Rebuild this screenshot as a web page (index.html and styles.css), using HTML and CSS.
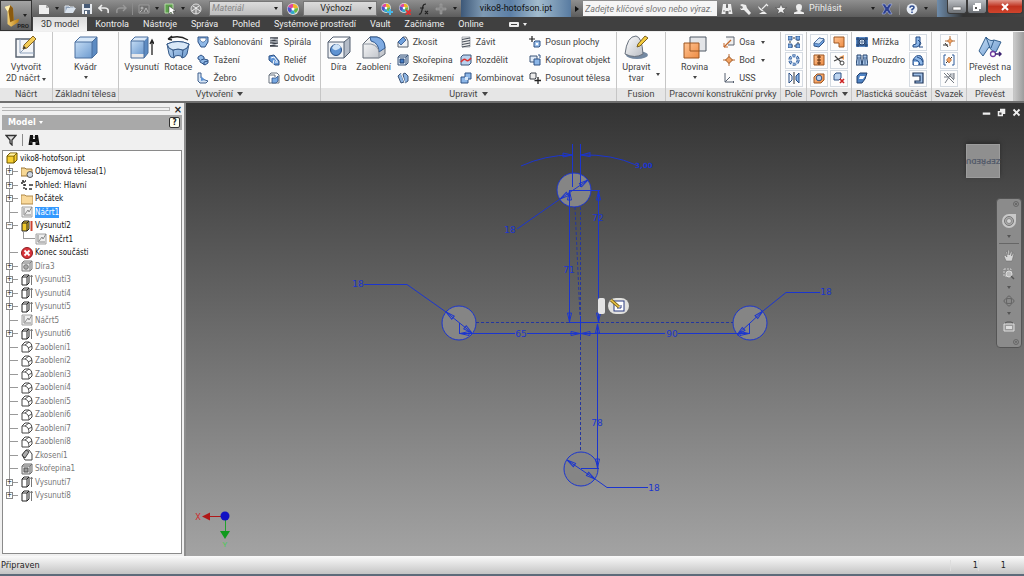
FILE: index.html
```html
<!DOCTYPE html>
<html lang="cs">
<head>
    <meta charset="UTF-8">
    <meta name="viewport" content="width=device-width, initial-scale=1.0">
    <title>viko8-hotofson.ipt</title>
    <link rel="stylesheet" href="styles.css">
</head>
<body>
    <!-- Icon library -->
    <svg class="icon-library" aria-hidden="true">
        <defs>
            <linearGradient id="blue" x1="0" y1="0" x2="1" y2="1"><stop offset="0" stop-color="#c4dcf4"/><stop offset="1" stop-color="#6d9bd0"/></linearGradient>
            <linearGradient id="grey" x1="0" y1="0" x2="1" y2="1"><stop offset="0" stop-color="#ffffff"/><stop offset="1" stop-color="#b9bdc4"/></linearGradient>
            <linearGradient id="orange" x1="0" y1="0" x2="1" y2="1"><stop offset="0" stop-color="#ffc493"/><stop offset="1" stop-color="#ee8c44"/></linearGradient>
            <linearGradient id="gold" x1="0" y1="0" x2="1" y2="0"><stop offset="0" stop-color="#ffe28a"/><stop offset="1" stop-color="#b97a12"/></linearGradient>
        </defs>

        <!-- quick access -->
        <symbol id="i-new" viewBox="0 0 12 12"><path d="M1 2h7l3 3v6H1z" fill="#eee"/><path d="M8 2v3h3" fill="#aaa"/></symbol>
        <symbol id="i-open" viewBox="0 0 12 12"><path d="M1 10V3h4l1 1h4v2" fill="#8a9db5" stroke="#dfe6ee"/><path d="M1 10l2-5h9l-3 5z" fill="#d9e2ec"/></symbol>
        <symbol id="i-save" viewBox="0 0 12 12"><path d="M1 1h10v10H1z" fill="#e6e9ee"/><path d="M3 1h6v4H3z" fill="#475a75"/><path d="M3 7h6v4H3z" fill="#5a6a80"/><path d="M4 8h2v3H4z" fill="#fff"/></symbol>
        <symbol id="i-undo" viewBox="0 0 12 12"><path d="M4 2L1 5l3 3M1.500 5H7q4 0 3 5" fill="none" stroke="#eee" stroke-width="1.600"/></symbol>
        <symbol id="i-redo" viewBox="0 0 12 12"><path d="M8 2l3 3-3 3M10.500 5H5q-4 0-3 5" fill="none" stroke="#999" stroke-width="1.400"/></symbol>
        <symbol id="i-team" viewBox="0 0 12 12"><path d="M1 2h10v8H1z" fill="#6f6f6f" stroke="#9b9b9b"/><circle cx="4" cy="5" r="1.500" fill="#aaa"/><path d="M6 9l2-4 2 4M2 9l2-2" stroke="#b5b5b5" fill="none"/></symbol>
        <symbol id="i-pick" viewBox="0 0 12 12"><path d="M1 1h8v9H1z" fill="#5da04d" stroke="#b7dba8"/><path d="M5 3v8l2-2 2 3 1-1-1-3h3z" fill="#fff" stroke="#333" stroke-width=".5"/></symbol>
        <symbol id="i-globe" viewBox="0 0 12 12"><circle cx="6" cy="6" r="5" fill="#8c8c8c" stroke="#ddd"/><path d="M3 3l3 2 3-2M2 8l4-3 4 3M6 5v6" stroke="#eee" fill="none"/></symbol>
        <symbol id="i-wheel" viewBox="0 0 12 12"><circle cx="6" cy="6" r="6" fill="#ddd"/><path d="M6 6L1 4a5 5 0 0 1 5-3z" fill="#e3479b"/><path d="M6 6V1a5 5 0 0 1 5 4z" fill="#f0b429"/><path d="M6 6l5-1a5 5 0 0 1-3 5z" fill="#67bb44"/><path d="M6 6l2 4.500a5 5 0 0 1-5-.5z" fill="#2fa9c9"/><path d="M6 6l-3 4a5 5 0 0 1-2-6z" fill="#4b55c9"/><circle cx="6" cy="6" r="1.500" fill="#fff"/></symbol>
        <symbol id="i-wheel-add" viewBox="0 0 12 12"><use href="#i-wheel" width="10" height="10"/><path d="M9 6v6M6 9h6" stroke="#49b8e8" stroke-width="2"/></symbol>
        <symbol id="i-wheel-del" viewBox="0 0 12 12"><use href="#i-wheel" width="10" height="10"/><path d="M7 7l5 5M12 7l-5 5" stroke="#d33" stroke-width="1.800"/></symbol>
        <symbol id="i-fx" viewBox="0 0 12 12"><path d="M2 11q2 1 3-4l1-4q.5-2 3-2M3 5h4M8 8l3 3M11 8l-3 3" fill="none" stroke="#222" stroke-width="1.200"/></symbol>
        <symbol id="i-plus" viewBox="0 0 12 12"><path d="M5 1h2v4h4v2H7v4H5V7H1V5h4z" fill="#888" stroke="#aaa" stroke-width=".5"/></symbol>
        <symbol id="i-binoc" viewBox="0 0 12 12"><path d="M2 1h3v4h2V1h3l1.500 10h-4V8h-3v3h-4z" fill="currentColor"/><path d="M2 8h2M8 8h2M6 2v2" stroke="#555" stroke-width=".8"/></symbol>
        <symbol id="i-key" viewBox="0 0 12 12"><path d="M1 2l2-1 4 1 1 3 4 5-2 2-5-5H2L1 5l2 1 1-2z" fill="#eee"/></symbol>
        <symbol id="i-dish" viewBox="0 0 12 12"><path d="M1 3q1 5 7 6zM5 9h3l2 2H2z" fill="#eee"/><path d="M5 6l4-4M9 1l2 2" stroke="#eee" stroke-width="1.200"/></symbol>
        <symbol id="i-star" viewBox="0 0 12 12"><path d="M6 .8l1.500 3.700 4 .2-3.100 2.500 1.100 3.900L6 9l-3.500 2.100 1.100-3.900L.5 4.700l4-.2z" fill="#eee" stroke="#444" stroke-width=".6"/></symbol>
        <symbol id="i-user" viewBox="0 0 12 12"><path d="M6 1q3 0 3 3t-2 4l4 1.500V11H1V9.500L5 8Q3 7 3 4t3-3z" fill="#eee"/></symbol>
        <symbol id="i-exchange" viewBox="0 0 12 12"><path d="M1 1h3l2 3 2-3h3L8 6l3 5H8L6 8l-2 3H1l3-5z" fill="#2c3f8f" stroke="#aab6e6" stroke-width=".6"/></symbol>
        <symbol id="i-help" viewBox="0 0 12 12"><circle cx="6" cy="6" r="5.400" fill="#e9eef6"/><path d="M4 4.700Q4 3 6 3t2 1.500Q8 5.500 6 6.500v1M6 8.500V10" stroke="#2d4b8e" stroke-width="1.500" fill="none"/></symbol>

        <!-- large ribbon icons -->
        <symbol id="b-sketch" viewBox="0 0 24 24"><path d="M2 4h18v18H2z" fill="#f3f5f8" stroke="#55606e" stroke-width="1.400"/><path d="M6 4v14h14M6 18l10-10" stroke="#8fa3bd" fill="none"/><path d="M9 14l1-4 9-9 3 3-9 9z" fill="#f3cc57" stroke="#836325"/><path d="M9 14l1-3 2 2z" fill="#333"/></symbol>
        <symbol id="b-box" viewBox="0 0 24 24"><path d="M1 7h17v16H1z" fill="url(#blue)"/><path d="M1 7l5-5h17l-5 5z" fill="#d6e7f8"/><path d="M18 7l5-5v16l-5 5z" fill="#5d8bc2"/><path d="M1 7h17v16H1zM1 7l5-5h17v16l-5 5M18 7l5-5" fill="none" stroke="#4a6f9e"/></symbol>
        <symbol id="b-extrude" viewBox="0 0 24 24"><path d="M1 6h13v13H1z" fill="url(#blue)"/><path d="M1 19h13v4H1z" fill="#e8e8ea"/><path d="M1 6l4-4h13l-4 4z" fill="#dbe9f8"/><path d="M14 6l4-4v16l-4 5z" fill="#5d8bc2"/><path d="M1 6h13v17H1zM1 6l4-4h13v16l-4 5" fill="none" stroke="#4a6f9e"/><path d="M22 20V6M20 9l2-4 2 4" stroke="#222" fill="none" stroke-width="1.300"/></symbol>
        <symbol id="b-revolve" viewBox="0 0 24 24"><path d="M1 9q11-5 22 0l-2 10q-2 4-5 4l-1-2q-3-1-6 0l-1 2q-4 0-5-4z" fill="url(#blue)" stroke="#365a88"/><path d="M1 9q1 5 6 6 5-2 10 0 5-1 6-6M7 15l1 8M17 15l-1 8" fill="none" stroke="#365a88"/><path d="M1 9q11-5 22 0-1 5-6 6-5-2-10 0-5-1-6-6z" fill="#d9e8f7" stroke="#365a88"/><path d="M2 4q10-5 20 1M2 4l4-3M2 4l4 1" stroke="#222" fill="none" stroke-width="1.300"/></symbol>
        <symbol id="b-hole" viewBox="0 0 24 24"><path d="M1 7h16v16H1z" fill="#eef1f5"/><path d="M1 7l5-5h17l-6 5z" fill="#fff"/><path d="M17 7l6-5v15l-6 6z" fill="#b4bcc8"/><path d="M1 7h16v16H1zM1 7l5-5h17v15l-6 6M17 7l6-5" fill="none" stroke="#525f70"/><circle cx="9" cy="15" r="5.500" fill="#5f93d2" stroke="#284f85"/><path d="M5 13q4 5 9-1-2-3-5-3-3 1-4 4z" fill="#cde2f7"/></symbol>
        <symbol id="b-fillet" viewBox="0 0 24 24"><path d="M1 23V9l7-7h7q8 2 8 11v6l-6 4z" fill="url(#grey)" stroke="#626b77"/><path d="M8 2h7q8 2 8 11l-6 4q0-9-8-11z" fill="#7fabe2" stroke="#315a91"/><path d="M1 9h8q8 2 8 9v5" fill="none" stroke="#8c949f"/></symbol>
        <symbol id="b-fusion" viewBox="0 0 24 24"><ellipse cx="13" cy="20" rx="11" ry="4" fill="#7388a1"/><path d="M1 19Q3 1 12 1q6 1 7 18-8 5-18 0z" fill="url(#grey)" stroke="#68717d"/><path d="M13 12l1-3 7-8 3 2-8 8z" fill="#f4cb3c" stroke="#7c6120"/></symbol>
        <symbol id="b-plane" viewBox="0 0 24 24"><path d="M7 2h16v14H7z" fill="#e3e5e8" stroke="#4e5865"/><path d="M1 8h15v15H1z" fill="url(#orange)" stroke="#9d5722"/><path d="M7 8v8h9" fill="none" stroke="#9d5722"/></symbol>
        <symbol id="b-sheet" viewBox="0 0 24 24"><path d="M1 16L8 2q4 5 8 3l7 2-5 10q-4 0-7-5l-6 9z" fill="url(#blue)" stroke="#35618f"/><path d="M8 2l4 11M16 5l-3 8" stroke="#35618f" fill="none"/><circle cx="15" cy="19" r="2.500" fill="#fff" stroke="#6e3b9f" stroke-width="1.300"/><path d="M17 19h6M21 17l2 2-2 2" stroke="#3b2370" fill="none" stroke-width="1.500"/></symbol>

        <!-- small ribbon icons -->
        <symbol id="s-loft" viewBox="0 0 12 12"><path d="M1 1h10v5L8 11H4L1 6z" fill="#8fb8e6" stroke="#2e5286"/><path d="M3 2h6v2L7 6H5L3 4z" fill="#fff" stroke="#2e5286" stroke-width=".6"/></symbol>
        <symbol id="s-sweep" viewBox="0 0 12 12"><path d="M1 3l3-2 3 2v2l4 1v3l-3 2-5-3V6L1 5z" fill="#8fb8e6" stroke="#2e5286"/><path d="M7 5l-3 1M11 7L7 8v3" stroke="#2e5286" fill="none"/></symbol>
        <symbol id="s-rib" viewBox="0 0 12 12"><path d="M1 1h3v5l4 2 3 1-2 2H3L1 9z" fill="#d5e4f5" stroke="#3e5f8c"/><path d="M4 4l4 4-4 1z" fill="#5d92d3"/></symbol>
        <symbol id="s-coil" viewBox="0 0 12 12"><path d="M2 2h8M2 4.600h8M2 7.200h8M2 9.800h8" stroke="#3b4049" stroke-width="1.700"/><path d="M2 2l8 2.600M2 4.600l8 2.600M2 7.200l8 2.600" stroke="#9aa1ab"/></symbol>
        <symbol id="s-emboss" viewBox="0 0 12 12"><path d="M1 2l5-1 5 6v4H7L1 6z" fill="#6296d6" stroke="#2e5286"/><path d="M3 4l3-1 3 4M6 6l-1 4M7 8h3" stroke="#fff" fill="none"/></symbol>
        <symbol id="s-derive" viewBox="0 0 12 12"><path d="M1 3l2-2h6l2 2v8H1z" fill="#fff" stroke="#69727e"/><path d="M4 6h4l2-2v5l-2 2H4z" fill="#79a9e2" stroke="#2e5286" stroke-width=".8"/><path d="M1 3h6v2" stroke="#69727e" fill="none"/></symbol>
        <symbol id="s-chamfer" viewBox="0 0 12 12"><path d="M1 11V6l5-5h3l2 4v6z" fill="#eef1f5" stroke="#56616f"/><path d="M1 6l5-5 3 3-5 5z" fill="#6fa0dc" stroke="#2e5286" stroke-width=".8"/></symbol>
        <symbol id="s-shell" viewBox="0 0 12 12"><path d="M1 3l2-2h8v8l-2 2H1z" fill="#dce8f6" stroke="#3b5478"/><path d="M1 3h8v8M9 3l2-2" fill="none" stroke="#3b5478"/><path d="M3 5h4v4H3z" fill="#457cc4" stroke="#203f6d"/></symbol>
        <symbol id="s-draft" viewBox="0 0 12 12"><path d="M1 4l3-3 3 9-3 1zM6 2l2-1 3 3v5l-3 2z" fill="#8fb6e4" stroke="#3b5478"/><path d="M4 1l4 10" stroke="#fff"/></symbol>
        <symbol id="s-thread" viewBox="0 0 12 12"><path d="M2 1h8v10H2z" fill="#eee" stroke="#7b828b" stroke-width=".6"/><path d="M2 3.500l8-1.500M2 6l8-1.500M2 8.500L10 7M2 11l8-1.500" stroke="#4a515b" stroke-width="1.100"/></symbol>
        <symbol id="s-split" viewBox="0 0 12 12"><path d="M1 3l2-2h8v8l-2 2H1z" fill="#b9d2ee" stroke="#3b5478"/><path d="M1 8q3-4 5-2t5-2" fill="none" stroke="#d33" stroke-width="1.500"/></symbol>
        <symbol id="s-combine" viewBox="0 0 12 12"><path d="M5 1h6v6H8v4H1V5h4z" fill="#8db7e8" stroke="#2e5286"/><path d="M5 5h3v3H5z" fill="#d8e8f9"/></symbol>
        <symbol id="s-moveface" viewBox="0 0 12 12"><path d="M3 0v6M0 3h6" stroke="#222" stroke-width="1.200"/><path d="M5 6l1-1h5v5l-1 1H5z" fill="#9fc3ec" stroke="#2e5286"/><path d="M7 7h2v2H7z" fill="#fff"/></symbol>
        <symbol id="s-copy" viewBox="0 0 12 12"><path d="M1 2h7v6H1z" fill="#e1ebf7" stroke="#3b5478"/><path d="M5 5h6v6H5z" fill="#8db7e8" stroke="#2e5286"/><path d="M9 1h2v3" stroke="#2e5286" fill="none"/></symbol>
        <symbol id="s-movebody" viewBox="0 0 12 12"><path d="M1 2l1-1h5v5L6 7H1z" fill="#eee" stroke="#3b4049"/><path d="M9 5v7M5.500 8.500H12" stroke="#222" stroke-width="1.300"/></symbol>
        <symbol id="s-axis" viewBox="0 0 12 12"><path d="M3 1h8v8H5" fill="#eee" stroke="#5c6570"/><path d="M1 11l7-7" stroke="#c2672a" stroke-width="1.300"/><path d="M1 11V7M1 11h4" stroke="#c2672a"/></symbol>
        <symbol id="s-point" viewBox="0 0 12 12"><path d="M6 0v12M0 6h12" stroke="#b86a35"/><path d="M6 2.500L9.500 6 6 9.500 2.500 6z" fill="#f3a261" stroke="#9d5722"/></symbol>
        <symbol id="s-ucs" viewBox="0 0 12 12"><path d="M2 1v9h9M2 10l5-5" fill="none" stroke="#566070"/><path d="M10 9l1 1-1 1" stroke="#566070" fill="none"/></symbol>
        <symbol id="s-rect" viewBox="0 0 12 12"><path d="M2 2h8v8H2z" fill="none" stroke="#333" stroke-dasharray="2 1"/><path d="M0 0h4v4H0zM8 0h4v4H8zM0 8h4v4H0zM8 8h4v4H8z" fill="#7eaae0" stroke="#234b85" stroke-width=".8"/></symbol>
        <symbol id="s-circ" viewBox="0 0 12 12"><circle cx="6" cy="6" r="4.200" fill="none" stroke="#2f5c9c" stroke-width="3" stroke-dasharray="3.200 1.200"/><circle cx="6" cy="6" r="4.200" fill="none" stroke="#b6d1f0"/></symbol>
        <symbol id="s-mirror" viewBox="0 0 12 12"><path d="M1 1l3 3v4l-3 3z" fill="#fff" stroke="#234b85"/><path d="M11 1L8 4v4l3 3z" fill="#8db7e8" stroke="#234b85"/><path d="M6 0v12" stroke="#333"/></symbol>
        <symbol id="s-thick" viewBox="0 0 12 12"><path d="M1 7l5-5 5 1v3l-5 5-5-1z" fill="#6c9fdc" stroke="#2e5286"/><path d="M1 7l5-5 5 1-5 5z" fill="#d7e8fa" stroke="#2e5286" stroke-width=".6"/></symbol>
        <symbol id="s-stitch" viewBox="0 0 12 12"><path d="M1 1h10v10H1z" fill="url(#orange)" stroke="#9d5722"/><path d="M6 1v10M4 3h4M4 6h4M4 9h4" stroke="#5f3110"/></symbol>
        <symbol id="s-sculpt" viewBox="0 0 12 12"><path d="M1 5l3-3h7v6l-3 3H1z" fill="url(#orange)" stroke="#9d5722"/><circle cx="6" cy="6" r="2.800" fill="#b9cfee" stroke="#2e5286"/></symbol>
        <symbol id="s-patch" viewBox="0 0 12 12"><path d="M1 1h10v10H6V7H1z" fill="url(#orange)" stroke="#9d5722"/></symbol>
        <symbol id="s-trim" viewBox="0 0 12 12"><path d="M6 3l5-2v5z" fill="#f0a060"/><path d="M2 2l6 6M1 7l9-4" stroke="#444" stroke-width="1.200"/><circle cx="9" cy="9" r="2" fill="none" stroke="#444"/></symbol>
        <symbol id="s-delface" viewBox="0 0 12 12"><path d="M1 3l2-2h5v5L6 8H1z" fill="#bcd4f0" stroke="#2e5286"/><path d="M7 7l4 4M11 7l-4 4" stroke="#c22" stroke-width="1.600"/></symbol>
        <symbol id="s-grill" viewBox="0 0 12 12"><path d="M0 1h12v10H0z" fill="#5b8ac6"/><path d="M2 1v10M10 1v10M0 3h12M0 9h12" stroke="#1f3c68"/><circle cx="6" cy="6" r="3" fill="#dce9f8" stroke="#1f3c68"/><path d="M3 6h6M6 3v6" stroke="#1f3c68" stroke-width=".6"/></symbol>
        <symbol id="s-boss" viewBox="0 0 12 12"><path d="M1 1h4v4l1 6H0l1-6zM7 1h4v4l1 6H6l1-6z" fill="#a9c7ea" stroke="#26456f"/><path d="M1 4h4M7 4h4M3 5v5M9 5v5" stroke="#26456f" stroke-width=".8"/></symbol>
        <symbol id="s-lip" viewBox="0 0 12 12"><path d="M1 4l3-3h7L9 7l-3 4H1z" fill="#4f83c4" stroke="#203f6d"/><path d="M4 4h5L7 7H3z" fill="#fff"/></symbol>
        <symbol id="s-snap" viewBox="0 0 12 12"><path d="M4 1h4v6q0 3-3 4H1V9l3-1z" fill="#8db7e8" stroke="#234b85"/><path d="M6 4l3 3-2 4h4" fill="none" stroke="#234b85"/></symbol>
        <symbol id="s-rest" viewBox="0 0 12 12"><path d="M1 11V6q3-6 8-4l2 4v5z" fill="#8db7e8" stroke="#234b85"/><path d="M1 6q6-1 7 5M5 3q5 1 6 5" fill="none" stroke="#234b85"/><path d="M2 8h4v3H2z" fill="#fff"/></symbol>
        <symbol id="s-rule" viewBox="0 0 12 12"><path d="M1 1h10v10H3V9h5V4H1z" fill="#9fc0e8" stroke="#1f3458" stroke-width="1.200"/></symbol>
        <symbol id="s-har1" viewBox="0 0 12 12"><path d="M7 0v10M2 5h10" stroke="#b3703e"/><path d="M7 2.500L9.500 5 7 7.500 4.500 5z" fill="#f3a261" stroke="#9d5722" stroke-width=".6"/><path d="M0 9h5M2 7l3 4" stroke="#333"/></symbol>
        <symbol id="s-har2" viewBox="0 0 12 12"><path d="M3 1H1v10h2M9 1h2v10H9" fill="none" stroke="#2f5c9c"/><path d="M3 9l6-6" stroke="#333"/><path d="M6 3l2.500 3L6 9 3.500 6z" fill="#f3a261" stroke="#9d5722" stroke-width=".6"/></symbol>
        <symbol id="s-har3" viewBox="0 0 12 12"><path d="M6 1h5v8z" fill="#c5c9cf"/><path d="M1 1l10 10M4 1l7 7M2 11l6-9M11 1v6M1 5h5" stroke="#757b83" fill="none"/></symbol>

        <!-- browser icons -->
        <symbol id="t-part" viewBox="0 0 12 12"><path d="M1 4l3-3h7v7l-3 3H1z" fill="#f7cf31" stroke="#6f5600"/><path d="M1 4h7v7M8 4l3-3" fill="none" stroke="#6f5600"/><path d="M2 3.500L4.500 1.500H10L8 3.500z" fill="#fff3a8"/></symbol>
        <symbol id="t-bodies" viewBox="0 0 12 12"><path d="M0 2h4l1 1h6v7H0z" fill="#f7d895" stroke="#9a7537"/><circle cx="9" cy="8.500" r="3" fill="#cfd8e4" stroke="#555"/></symbol>
        <symbol id="t-view" viewBox="0 0 12 12"><path d="M1 2h4M3 2v8h3M3 6h3M0 4h2" stroke="#222" fill="none" stroke-width="1.300" stroke-dasharray="2 1"/><path d="M8 6h4M8 10h3" stroke="#333" stroke-width="1.500"/></symbol>
        <symbol id="t-folder" viewBox="0 0 12 12"><path d="M0 2h4l1 1h7v8H0z" fill="#f9d99b" stroke="#b08948"/></symbol>
        <symbol id="t-sketch" viewBox="0 0 12 12"><path d="M1 1h10v10H1z" fill="#eee" stroke="#a0a0a0"/><path d="M3 2v7h7M4 8l3-4 1 2 3-5" stroke="#8a8a8a" fill="none"/></symbol>
        <symbol id="t-extrude-on" viewBox="0 0 12 12"><path d="M1 3l2-2h5v8l-2 2H1z" fill="#f0c92c" stroke="#222"/><path d="M6 3v8M1 3h5l2-2" stroke="#222" fill="none"/><path d="M10.500 11V1" stroke="#c43" stroke-width="2"/></symbol>
        <symbol id="t-extrude" viewBox="0 0 12 12"><path d="M1 3l2-2h5v8l-2 2H1z" fill="#fff" stroke="#222"/><path d="M1 3h5v8M6 3l2-2" stroke="#222" fill="none"/><path d="M10.500 11V1M9.500 3l1-2 1 2" stroke="#777" fill="none"/></symbol>
        <symbol id="t-end" viewBox="0 0 12 12"><circle cx="6" cy="6" r="5.500" fill="#d9333a" stroke="#8d1d22"/><path d="M3.500 3.500l5 5M8.500 3.500l-5 5" stroke="#fff" stroke-width="1.800"/></symbol>
        <symbol id="t-hole" viewBox="0 0 12 12"><path d="M1 3l2-2h8v8l-2 2H1z" fill="#e6e6e6" stroke="#7d7d7d"/><path d="M1 3h8v8M9 3l2-2" fill="none" stroke="#7d7d7d"/><circle cx="5" cy="7" r="2.300" fill="#aaa" stroke="#777"/></symbol>
        <symbol id="t-fillet" viewBox="0 0 12 12"><path d="M1 11V4l3-3h4q3 1 3 5v2l-3 3z" fill="#fff" stroke="#444"/><path d="M1 4h3q4 1 4 7M4 4l4-3M7 7l4-2" fill="none" stroke="#555"/></symbol>
        <symbol id="t-chamfer" viewBox="0 0 12 12"><path d="M1 6l4-5h3l3 4v6H4z" fill="#fff" stroke="#444"/><path d="M1 6l4-5 3 2-4 6z" fill="#aaa" stroke="#444"/></symbol>
        <symbol id="t-shell" viewBox="0 0 12 12"><path d="M1 3l2-2h8v8l-2 2H1z" fill="#ddd" stroke="#6d6d6d"/><path d="M9 3v8M1 3h8l2-2" fill="none" stroke="#6d6d6d"/><path d="M3 5h4v4H3z" fill="#999" stroke="#555"/></symbol>
    </svg>

    <header class="app-header">
        <button class="app-menu" aria-label="Aplikace">
            <svg class="app-logo" viewBox="0 0 20 26"><path d="M2 3l6-2 3 3 1 14 6-2-1 4-8 5-4-3L5 8z" fill="url(#gold)"/><path d="M8 1l3 3 1 14-4 2L6 7z" fill="#8a5a10"/><path d="M2 3l6-2-2 6-1 1z" fill="#fff0b0"/></svg>
            <span class="caret"></span>
            <span class="app-edition">PRO</span>
        </button>

        <div class="title-bar">
            <div class="quick-access">
                <button aria-label="Nový"><svg><use href="#i-new"/></svg></button>
                <span class="caret"></span>
                <button aria-label="Otevřít"><svg><use href="#i-open"/></svg></button>
                <button aria-label="Uložit"><svg><use href="#i-save"/></svg></button>
                <button aria-label="Zpět"><svg><use href="#i-undo"/></svg></button>
                <button aria-label="Znovu"><svg><use href="#i-redo"/></svg></button>
                <span class="divider"></span>
                <button aria-label="Tým"><svg><use href="#i-team"/></svg></button>
                <span class="caret"></span>
                <button aria-label="Výběr"><svg><use href="#i-pick"/></svg></button>
                <span class="caret"></span>
                <button aria-label="Knihovna"><svg><use href="#i-globe"/></svg></button>
            </div>
            <label class="picker">
                <select class="material" aria-label="Materiál"><option>Materiál</option></select>
                <span class="caret"></span>
            </label>
            <button aria-label="Vzhled"><svg><use href="#i-wheel"/></svg></button>
            <label class="picker">
                <select class="appearance" aria-label="Vzhled modelu"><option>Výchozí</option></select>
                <span class="caret"></span>
            </label>
            <div class="appearance-tools">
                <button aria-label="Upravit vzhled"><svg><use href="#i-wheel-add"/></svg></button>
                <button aria-label="Vymazat vzhled"><svg><use href="#i-wheel-del"/></svg></button>
                <button aria-label="Parametry"><svg><use href="#i-fx"/></svg></button>
                <button aria-label="Přidat"><svg><use href="#i-plus"/></svg></button>
                <span class="caret"></span>
            </div>
            <div class="document-title">viko8-hotofson.ipt</div>
            <span class="caret-right"></span>
            <input class="search" type="text" aria-label="Hledat" placeholder="Zadejte klíčové slovo nebo výraz.">
            <div class="info-center">
                <button aria-label="Hledat"><svg><use href="#i-binoc"/></svg></button>
                <button aria-label="Předplatné"><svg><use href="#i-key"/></svg></button>
                <button aria-label="Komunikace"><svg><use href="#i-dish"/></svg></button>
                <button aria-label="Oblíbené"><svg><use href="#i-star"/></svg></button>
                <button class="sign-in"><svg><use href="#i-user"/></svg>Přihlásit</button>
            </div>
            <div class="help-center">
                <span class="caret"></span>
                <button aria-label="Exchange"><svg><use href="#i-exchange"/></svg></button>
                <span class="divider"></span>
                <button aria-label="Nápověda"><svg><use href="#i-help"/></svg></button>
                <span class="caret"></span>
            </div>
            <div class="window-buttons">
                <button aria-label="Minimalizovat"><svg viewBox="0 0 12 12"><path d="M2 6h8v3H2z" fill="#fff" stroke="#555" stroke-width=".5"/></svg></button>
                <button aria-label="Obnovit"><svg viewBox="0 0 12 12"><path d="M4 2h6v6H8v2H2V4h2z" fill="#fff"/><path d="M4 6h2v2H4z" fill="#555"/></svg></button>
                <button class="close" aria-label="Zavřít"><svg viewBox="0 0 12 12"><path d="M3 3l6 6M9 3L3 9" stroke="#fff" stroke-width="2"/></svg></button>
            </div>
        </div>

        <nav class="tabs">
            <button class="tab active">3D model</button>
            <button class="tab">Kontrola</button>
            <button class="tab">Nástroje</button>
            <button class="tab">Správa</button>
            <button class="tab">Pohled</button>
            <button class="tab">Systémové prostředí</button>
            <button class="tab">Vault</button>
            <button class="tab">Začínáme</button>
            <button class="tab">Online</button>
            <button class="tab-toggle" aria-label="Sbalit pás karet"><span class="toggle-box"></span><span class="caret"></span></button>
        </nav>
    </header>

    <div class="ribbon">
        <section class="panel">
            <div class="panel-body">
                <button class="big"><svg><use href="#b-sketch"/></svg><span>Vytvořit<br>2D náčrt <i class="caret"></i></span></button>
            </div>
            <h2>Náčrt</h2>
        </section>
        <section class="panel">
            <div class="panel-body">
                <button class="big"><svg><use href="#b-box"/></svg><span>Kvádr</span><i class="caret"></i></button>
            </div>
            <h2>Základní tělesa</h2>
        </section>
        <section class="panel">
            <div class="panel-body">
                <button class="big"><svg><use href="#b-extrude"/></svg><span>Vysunutí</span></button>
                <button class="big"><svg><use href="#b-revolve"/></svg><span>Rotace</span></button>
                <div class="stack">
                    <button><svg><use href="#s-loft"/></svg>Šablonování</button>
                    <button><svg><use href="#s-sweep"/></svg>Tažení</button>
                    <button><svg><use href="#s-rib"/></svg>Žebro</button>
                </div>
                <div class="stack">
                    <button><svg><use href="#s-coil"/></svg>Spirála</button>
                    <button><svg><use href="#s-emboss"/></svg>Reliéf</button>
                    <button><svg><use href="#s-derive"/></svg>Odvodit</button>
                </div>
            </div>
            <h2>Vytvoření <i class="caret"></i></h2>
        </section>
        <section class="panel">
            <div class="panel-body">
                <button class="big"><svg><use href="#b-hole"/></svg><span>Díra</span></button>
                <button class="big"><svg><use href="#b-fillet"/></svg><span>Zaoblení</span></button>
                <div class="stack">
                    <button><svg><use href="#s-chamfer"/></svg>Zkosit</button>
                    <button><svg><use href="#s-shell"/></svg>Skořepina</button>
                    <button><svg><use href="#s-draft"/></svg>Zešikmení</button>
                </div>
                <div class="stack">
                    <button><svg><use href="#s-thread"/></svg>Závit</button>
                    <button><svg><use href="#s-split"/></svg>Rozdělit</button>
                    <button><svg><use href="#s-combine"/></svg>Kombinovat</button>
                </div>
                <div class="stack">
                    <button><svg><use href="#s-moveface"/></svg>Posun plochy</button>
                    <button><svg><use href="#s-copy"/></svg>Kopírovat objekt</button>
                    <button><svg><use href="#s-movebody"/></svg>Posunout tělesa</button>
                </div>
            </div>
            <h2>Upravit <i class="caret"></i></h2>
        </section>
        <section class="panel">
            <div class="panel-body">
                <button class="big"><svg><use href="#b-fusion"/></svg><span>Upravit<br>tvar</span></button>
                <i class="caret low"></i>
            </div>
            <h2>Fusion</h2>
        </section>
        <section class="panel">
            <div class="panel-body">
                <button class="big"><svg><use href="#b-plane"/></svg><span>Rovina</span><i class="caret"></i></button>
                <div class="stack">
                    <button><svg><use href="#s-axis"/></svg>Osa <i class="caret"></i></button>
                    <button><svg><use href="#s-point"/></svg>Bod <i class="caret"></i></button>
                    <button><svg><use href="#s-ucs"/></svg>USS</button>
                </div>
            </div>
            <h2>Pracovní konstrukční prvky</h2>
        </section>
        <section class="panel">
            <div class="panel-body">
                <div class="stack boxed">
                    <button aria-label="Obdélníkové pole"><svg><use href="#s-rect"/></svg></button>
                    <button aria-label="Kruhové pole"><svg><use href="#s-circ"/></svg></button>
                    <button aria-label="Zrcadlit"><svg><use href="#s-mirror"/></svg></button>
                </div>
            </div>
            <h2>Pole</h2>
        </section>
        <section class="panel">
            <div class="panel-body">
                <div class="stack boxed">
                    <button aria-label="Zesílení"><svg><use href="#s-thick"/></svg></button>
                    <button aria-label="Sešít"><svg><use href="#s-stitch"/></svg></button>
                    <button aria-label="Tvarovat"><svg><use href="#s-sculpt"/></svg></button>
                </div>
                <div class="stack boxed">
                    <button aria-label="Záplata"><svg><use href="#s-patch"/></svg></button>
                    <button aria-label="Oříznout"><svg><use href="#s-trim"/></svg></button>
                    <button aria-label="Odstranit plochu"><svg><use href="#s-delface"/></svg></button>
                </div>
            </div>
            <h2>Povrch <i class="caret"></i></h2>
        </section>
        <section class="panel">
            <div class="panel-body">
                <div class="stack">
                    <button><svg><use href="#s-grill"/></svg>Mřížka</button>
                    <button><svg><use href="#s-boss"/></svg>Pouzdro</button>
                    <button aria-label="Obruba"><svg><use href="#s-lip"/></svg></button>
                </div>
                <div class="stack boxed">
                    <button aria-label="Západka"><svg><use href="#s-snap"/></svg></button>
                    <button aria-label="Podpěra"><svg><use href="#s-rest"/></svg></button>
                    <button aria-label="Pravidlo zaoblení"><svg><use href="#s-rule"/></svg></button>
                </div>
            </div>
            <h2>Plastická součást</h2>
        </section>
        <section class="panel">
            <div class="panel-body">
                <div class="stack boxed">
                    <button aria-label="Kolík"><svg><use href="#s-har1"/></svg></button>
                    <button aria-label="Skupina kolíků"><svg><use href="#s-har2"/></svg></button>
                    <button aria-label="Vlastnosti svazku"><svg><use href="#s-har3"/></svg></button>
                </div>
            </div>
            <h2>Svazek</h2>
        </section>
        <section class="panel">
            <div class="panel-body">
                <button class="big"><svg><use href="#b-sheet"/></svg><span>Převést na<br>plech</span></button>
            </div>
            <h2>Převést</h2>
        </section>
        <div class="ribbon-end"></div>
    </div>

    <main class="workspace">
        <aside class="browser">
            <div class="browser-grip"><span></span><button aria-label="Zavřít panel">×</button></div>
            <div class="browser-title">
                <button class="browser-name">Model <i class="caret"></i></button>
                <button class="browser-help" aria-label="Nápověda">?</button>
            </div>
            <div class="browser-tools">
                <button aria-label="Filtr"><svg viewBox="0 0 12 12"><path d="M1 1.500h10L7 6v5L5 9V6z" fill="#ddd" stroke="#333" stroke-width="1.300"/></svg></button>
                <span class="divider"></span>
                <button aria-label="Najít"><svg><use href="#i-binoc"/></svg></button>
            </div>
            <ul class="tree">
                <li class="root"><svg><use href="#t-part"/></svg><span>viko8-hotofson.ipt</span></li>
                <li><span class="twig"><button aria-label="Rozbalit">+</button></span><svg><use href="#t-bodies"/></svg><span>Objemová tělesa(1)</span></li>
                <li><span class="twig"><button aria-label="Rozbalit">+</button></span><svg><use href="#t-view"/></svg><span>Pohled: Hlavní</span></li>
                <li><span class="twig"><button aria-label="Rozbalit">+</button></span><svg><use href="#t-folder"/></svg><span>Počátek</span></li>
                <li><span class="twig"></span><svg><use href="#t-sketch"/></svg><span class="selected">Náčrt1</span></li>
                <li><span class="twig"><button aria-label="Sbalit">−</button></span><svg><use href="#t-extrude-on"/></svg><span>Vysunutí2</span></li>
                <li class="child"><span class="elbow"></span><svg><use href="#t-sketch"/></svg><span>Náčrt1</span></li>
                <li><span class="twig"></span><svg><use href="#t-end"/></svg><span>Konec součásti</span></li>
                <li class="off"><span class="twig"><button aria-label="Rozbalit">+</button></span><svg><use href="#t-hole"/></svg><span>Díra3</span></li>
                <li class="off"><span class="twig"><button aria-label="Rozbalit">+</button></span><svg><use href="#t-extrude"/></svg><span>Vysunutí3</span></li>
                <li class="off"><span class="twig"><button aria-label="Rozbalit">+</button></span><svg><use href="#t-extrude"/></svg><span>Vysunutí4</span></li>
                <li class="off"><span class="twig"><button aria-label="Rozbalit">+</button></span><svg><use href="#t-extrude"/></svg><span>Vysunutí5</span></li>
                <li class="off"><span class="twig"></span><svg><use href="#t-sketch"/></svg><span>Náčrt5</span></li>
                <li class="off"><span class="twig"><button aria-label="Rozbalit">+</button></span><svg><use href="#t-extrude"/></svg><span>Vysunutí6</span></li>
                <li class="off"><span class="twig"></span><svg><use href="#t-fillet"/></svg><span>Zaoblení1</span></li>
                <li class="off"><span class="twig"></span><svg><use href="#t-fillet"/></svg><span>Zaoblení2</span></li>
                <li class="off"><span class="twig"></span><svg><use href="#t-fillet"/></svg><span>Zaoblení3</span></li>
                <li class="off"><span class="twig"></span><svg><use href="#t-fillet"/></svg><span>Zaoblení4</span></li>
                <li class="off"><span class="twig"></span><svg><use href="#t-fillet"/></svg><span>Zaoblení5</span></li>
                <li class="off"><span class="twig"></span><svg><use href="#t-fillet"/></svg><span>Zaoblení6</span></li>
                <li class="off"><span class="twig"></span><svg><use href="#t-fillet"/></svg><span>Zaoblení7</span></li>
                <li class="off"><span class="twig"></span><svg><use href="#t-fillet"/></svg><span>Zaoblení8</span></li>
                <li class="off"><span class="twig"></span><svg><use href="#t-chamfer"/></svg><span>Zkosení1</span></li>
                <li class="off"><span class="twig"></span><svg><use href="#t-shell"/></svg><span>Skořepina1</span></li>
                <li class="off"><span class="twig"><button aria-label="Rozbalit">+</button></span><svg><use href="#t-extrude"/></svg><span>Vysunutí7</span></li>
                <li class="off"><span class="twig"><button aria-label="Rozbalit">+</button></span><svg><use href="#t-extrude"/></svg><span>Vysunutí8</span></li>
            </ul>
        </aside>

        <div class="canvas">
            <svg class="drawing" viewBox="186 103 838 453">
                <defs>
                    <marker id="arrow" viewBox="0 0 10 6" refX="10" refY="3" markerWidth="10" markerHeight="6" markerUnits="userSpaceOnUse" orient="auto-start-reverse">
                        <path d="M10 3L1 1v4z" fill="none" stroke="#1b35cf"/>
                    </marker>
                </defs>

                <!-- profiles -->
                <g class="profile">
                    <circle cx="574" cy="190" r="17"/>
                    <circle cx="459" cy="323" r="17"/>
                    <circle cx="750" cy="323" r="17"/>
                    <circle cx="581" cy="469" r="17"/>
                </g>

                <!-- construction lines -->
                <g class="construction">
                    <path d="M476 322.500H733M580.500 207V452M575 207L580 316"/>
                </g>

                <!-- linear dimensions -->
                <g class="dimension">
                    <path d="M572.500 144V187M580.500 144V187M569 190.500H600M569 322.500H600M580.500 316V337M581 468.500H599M459.500 323V334M749.500 323V334"/>
                    <path d="M569.500 191V322" marker-start="url(#arrow)" marker-end="url(#arrow)"/>
                    <path d="M598.500 191V322" marker-start="url(#arrow)" marker-end="url(#arrow)"/>
                    <path d="M597.500 324V468" marker-start="url(#arrow)" marker-end="url(#arrow)"/>
                    <path d="M515 333.500H460" marker-end="url(#arrow)"/>
                    <path d="M527 333.500H580" marker-end="url(#arrow)"/>
                    <path d="M665 333.500H581" marker-end="url(#arrow)"/>
                    <path d="M678 333.500H749" marker-end="url(#arrow)"/>
                    <path d="M521 166Q545 155 572 155" marker-end="url(#arrow)"/>
                    <path d="M581 155Q612 154 636 165" marker-start="url(#arrow)"/>
                </g>

                <!-- diameter leaders -->
                <g class="dimension">
                    <path d="M588 180L560 199" marker-start="url(#arrow)" marker-end="url(#arrow)"/>
                    <path d="M560 199L517 229"/>
                    <path d="M446 312L472 333" marker-start="url(#arrow)" marker-end="url(#arrow)"/>
                    <path d="M364 284.500H407L446 312"/>
                    <path d="M737 335L763 311" marker-start="url(#arrow)" marker-end="url(#arrow)"/>
                    <path d="M763 311L786 292.500H820"/>
                    <path d="M567 460L595 479" marker-start="url(#arrow)" marker-end="url(#arrow)"/>
                    <path d="M595 479L607 487.500H648"/>
                </g>

                <g class="value">
                    <text x="644" y="168" class="angle">3,00</text>
                    <text x="510" y="233">18</text>
                    <text x="598" y="221">72</text>
                    <text x="569" y="273">71</text>
                    <text x="358" y="287">18</text>
                    <text x="826" y="295">18</text>
                    <text x="521" y="337">65</text>
                    <text x="672" y="337">90</text>
                    <text x="597" y="426">78</text>
                    <text x="654" y="491">18</text>
                </g>

                <!-- mini toolbar -->
                <rect x="598" y="298" width="7" height="16" rx="2" fill="#e4e4e4"/>
                <rect x="608" y="298" width="21" height="16" rx="8" fill="#e1e1de"/>
                <rect x="614" y="301" width="10" height="10" fill="#fff" stroke="#2b3a80"/>
                <path d="M617 308h4v-3" fill="none" stroke="#2b3a80"/>
                <path d="M611 300l8 7" stroke="#7b6216" stroke-width="3"/>
                <path d="M611 300l8 7" stroke="#ecc64a" stroke-width="1.500"/>

                <!-- axis triad -->
                <path d="M225 516.500H209" stroke="#b01818"/>
                <path d="M202 516.500l8-4v8z" fill="#b01818"/>
                <path d="M225.500 516V532" stroke="#1fa32b"/>
                <path d="M225 539l-5-8h10z" fill="#109a1e"/>
                <circle cx="225" cy="516" r="4.500" fill="#1111c4"/>
                <text x="198" y="520" class="axis-x">X</text>
                <text x="225" y="547" class="axis-y">Y</text>
            </svg>

            <div class="view-buttons">
                <button aria-label="Minimalizovat pohled"><svg viewBox="0 0 12 12"><path d="M1 6h10v3H1z" fill="#eee"/></svg></button>
                <button aria-label="Obnovit pohled"><svg viewBox="0 0 12 12"><path d="M4 1h7v7H8v3H1V4h3z" fill="#eee"/><path d="M3 6h3v3H3z" fill="#444"/></svg></button>
                <button aria-label="Zavřít pohled"><svg viewBox="0 0 12 12"><path d="M2 2l8 8M10 2l-8 8" stroke="#eee" stroke-width="2.500"/></svg></button>
            </div>
            <button class="view-cube"><span>ZEPŘEDU</span></button>
            <div class="nav-bar">
                <button class="tiny" aria-label="Zavřít"><svg viewBox="0 0 12 12"><circle cx="6" cy="6" r="5" fill="none" stroke="#444"/><path d="M4 4l4 4M8 4l-4 4" stroke="#444"/></svg></button>
                <button class="wheel" aria-label="Navigační kolečko"><svg viewBox="0 0 16 16"><path d="M8 1h7v7a7 7 0 1 1-7-7z" fill="#c8c8c8"/><circle cx="8" cy="8" r="4.500" fill="#aaa" stroke="#777"/><circle cx="8" cy="8" r="2.500" fill="#d2d2d2" stroke="#888"/></svg></button>
                <span class="caret"></span>
                <hr>
                <button aria-label="Posun"><svg viewBox="0 0 12 12"><path d="M3 11L1 6l1-1 2 2-1-5 1-1 1 4V0h1.500v5L8 1l1 .5L8.500 6 10 3l1 .5L9 11z" fill="#d5d5d5" stroke="#666" stroke-width=".5"/></svg></button>
                <button aria-label="Zoom"><svg viewBox="0 0 12 12"><path d="M1 1h7v7H1z" fill="none" stroke="#ccc" stroke-dasharray="2 1"/><circle cx="6" cy="6" r="3" fill="#bbb" stroke="#ddd"/><path d="M8 8l3 3" stroke="#555" stroke-width="1.500"/></svg></button>
                <span class="caret"></span>
                <button aria-label="Orbita"><svg viewBox="0 0 12 12"><ellipse cx="6" cy="6" rx="2.500" ry="5" fill="none" stroke="#666"/><ellipse cx="6" cy="6" rx="5" ry="2.500" fill="none" stroke="#666"/></svg></button>
                <span class="caret"></span>
                <button aria-label="Pohled na"><svg viewBox="0 0 12 12"><path d="M1 3h10v7H1z" fill="#999" stroke="#ddd"/><path d="M3 5h6v3H3z" fill="#ddd"/><path d="M2 2l2-1h4l2 1" stroke="#555" fill="none"/></svg></button>
                <button class="tiny" aria-label="Přizpůsobit"><svg viewBox="0 0 12 12"><circle cx="6" cy="6" r="5" fill="none" stroke="#444"/><path d="M4 5l2 3 2-3z" fill="#444"/></svg></button>
            </div>
        </div>
    </main>

    <footer class="status-bar">
        <span class="status-text">Připraven</span>
        <span class="count">1</span>
        <span class="count">1</span>
    </footer>
</body>
</html>
```
FILE: styles.css
```css
:root {
    --bar-dark: #404040;
    --panel-label: #e6e6e6;
    --line: #c6c6c6;
    --text-color: #333;
    --sketch-blue: #1b35cf;
}

* {
    box-sizing: border-box;
    margin: 0;
    padding: 0;
}

body {
    display: flex;
    flex-direction: column;
    height: 100vh;
    overflow: hidden;
    font-family: Roboto, "Noto Sans", sans-serif;
    font-size: 9px;
    line-height: 11px;
    color: var(--text-color);
    background: #f0f0f0;
}

button, input, select {
    font: inherit;
    color: inherit;
    background: none;
    border: none;
    white-space: nowrap;
}

button {
    display: flex;
    align-items: center;
}

svg {
    display: block;
    width: 12px;
    height: 12px;
    flex-shrink: 0;
}

.icon-library {
    position: absolute;
    width: 0;
    height: 0;
}

.caret {
    display: inline-block;
    flex-shrink: 0;
    border: 2px solid transparent;
    border-top: 3px solid currentColor;
    border-bottom: 0;
}

.divider {
    width: 1px;
    height: 12px;
    background: #8a8a8a;
}

/* Header */
.app-header {
    display: grid;
    grid-template-columns: 32px 1fr;
    grid-template-rows: 17px 14px;
    flex-shrink: 0;
    background: var(--bar-dark);
}

.app-menu {
    grid-row: 1 / 3;
    position: relative;
    padding: 0 2px;
    gap: 2px;
    color: #222;
    background: linear-gradient(#a4a4a4, #5e5e5e);
    border: 1px solid #333;
}

.app-logo {
    width: 18px;
    height: 24px;
}

.app-edition {
    position: absolute;
    right: 2px;
    bottom: 0;
    font-size: 6px;
    font-weight: bold;
    line-height: 8px;
}

.title-bar {
    display: flex;
    align-items: center;
    gap: 4px;
    padding-left: 6px;
    color: #1c1c1c;
    background: linear-gradient(#8f8f8f, #5c5c5c);
}

.quick-access {
    display: flex;
    align-items: center;
    gap: 5px;
    margin-right: 3px;
}

.picker {
    display: flex;
    align-items: center;
    width: 74px;
    height: 15px;
    padding-right: 4px;
    background: linear-gradient(#dcdcdc, #bdbdbd);
    border: 1px solid #777;
}

.picker select {
    appearance: none;
    flex: 1;
    min-width: 0;
    line-height: 13px;
}

.material {
    padding-left: 2px;
    font-style: italic;
    color: #888;
}

.appearance {
    text-align: center;
    text-align-last: center;
}

.appearance-tools {
    display: flex;
    align-items: center;
    gap: 6px;
}

.document-title {
    flex: 0 0 110px;
    align-self: stretch;
    line-height: 17px;
    text-align: center;
    color: #111;
    background: linear-gradient(90deg, #3d5878, #7f9ab3 20%, #5c7fa6 45%, #a3bccd 70%, #587ba1);
}

.caret-right {
    border: 3px solid transparent;
    border-left: 4px solid #111;
    border-right: 0;
}

.search {
    width: 134px;
    height: 15px;
    padding: 0 2px;
    background: #f5f5f5;
}

.search::placeholder {
    font-style: italic;
    color: #777;
}

.info-center {
    display: flex;
    align-items: center;
    gap: 6px;
    color: #eee;
}

.sign-in {
    gap: 4px;
}

.help-center {
    display: flex;
    align-items: center;
    gap: 6px;
    margin-left: auto;
}

.window-buttons {
    display: flex;
    align-self: stretch;
    margin-left: 5px;
    padding: 0 1px 3px 10px;
    background: linear-gradient(90deg, #6e8cab, #333 30%, #444);
}

.window-buttons button {
    justify-content: center;
    width: 20px;
    background: linear-gradient(#b9bcc0, #6d7176);
    border: 1px solid #3a3a3a;
    border-top: none;
    border-radius: 0 0 3px 3px;
}

.window-buttons .close {
    width: 36px;
    background: linear-gradient(#e0968a, #c0321f 50%, #d0442c);
}

/* Tabs */
.tabs {
    display: flex;
    padding-left: 1px;
    color: #eee;
}

.tab {
    padding: 0 7px;
}

.tab.active {
    padding: 0 8px;
    margin-right: 1px;
    color: #333;
    background: linear-gradient(#d9d9d9, #f2f2f2);
}

.tab-toggle {
    gap: 4px;
    padding-left: 18px;
}

.toggle-box {
    width: 10px;
    height: 5px;
    border: 2px solid #eee;
    border-radius: 1px;
}

/* Ribbon */
.ribbon {
    display: grid;
    grid-template-columns: 53fr 66fr 202fr 296fr 49fr 115fr 26fr 45fr 80fr 35fr 47fr 10fr;
    flex-shrink: 0;
    height: 72px;
    background: #fdfdfd;
    border-top: 1px solid #eee;
    border-bottom: 2px solid #6f6f6f;
}

.panel {
    display: flex;
    flex-direction: column;
    min-width: 0;
    border-right: 1px solid var(--line);
}

.panel-body {
    display: flex;
    flex: 1;
    align-items: center;
    justify-content: space-evenly;
    color: #444;
}

.panel h2 {
    height: 13px;
    font-size: 9px;
    font-weight: normal;
    line-height: 13px;
    text-align: center;
    white-space: nowrap;
    color: #444;
    background: var(--panel-label);
}

.panel h2 .caret {
    margin: 0 0 1px 2px;
    border-width: 3px;
    border-top-width: 4px;
    border-bottom-width: 0;
}

.big {
    flex-direction: column;
    align-self: flex-start;
    gap: 3px;
    padding-top: 3px;
    text-align: center;
}

.big svg {
    width: 24px;
    height: 24px;
}

.low {
    align-self: flex-end;
    margin-bottom: 12px;
}

.stack {
    display: grid;
    grid-template-rows: repeat(3, 18px);
}

.stack button {
    gap: 4px;
}

.stack .caret {
    margin-left: 2px;
}

.boxed {
    row-gap: 1px;
    grid-template-rows: repeat(3, 17px);
}

.boxed button {
    padding: 0 2px;
    border: 1px solid #d5dbe2;
}

.ribbon-end {
    background: linear-gradient(90deg, #c9c9c9, #9c9c9c);
}

/* Workspace */
.workspace {
    display: flex;
    flex: 1;
    min-height: 0;
}

.browser {
    display: flex;
    flex-direction: column;
    flex: 0 0 186px;
    padding: 0 2px 2px;
    font-family: "DejaVu Sans Condensed", "DejaVu Sans", sans-serif;
    font-size: 8px;
    background: #f0f0f0;
    border-right: 2px solid #8d8d8d;
}

.browser-grip {
    display: flex;
    align-items: center;
    gap: 4px;
    height: 12px;
}

.browser-grip span {
    flex: 1;
    height: 4px;
    border: 1px solid #b5b5b5;
    border-left: none;
}

.browser-grip button {
    font-size: 11px;
    font-weight: bold;
    color: #222;
}

.browser-title {
    display: flex;
    align-items: center;
    justify-content: space-between;
    height: 15px;
    padding: 0 2px 0 6px;
    color: #fff;
    background: #a9a9a9;
}

.browser-name {
    gap: 3px;
    font-size: 9px;
    font-weight: bold;
}

.browser-help {
    justify-content: center;
    width: 11px;
    height: 11px;
    font-weight: bold;
    color: #222;
    background: #fffff0;
    border: 1px solid #333;
    border-radius: 2px;
}

.browser-tools {
    display: flex;
    align-items: center;
    gap: 5px;
    height: 20px;
    padding-left: 3px;
    color: #111;
}

.tree {
    display: grid;
    grid-auto-rows: 14px 13px;
    flex: 1;
    align-content: start;
    min-height: 0;
    overflow: hidden;
    list-style: none;
    color: #111;
    background: #fff;
    border: 1px solid #8a8a8a;
}

.tree li {
    display: flex;
    align-items: center;
    padding-left: 6px;
    background: linear-gradient(#999, #999) 6px 0 / 1px 100% no-repeat;
}

.tree .root {
    gap: 2px;
    padding-left: 3px;
    background: none;
}

.tree li:last-child {
    background-size: 1px 50%;
}

.tree svg {
    margin-right: 2px;
}

.tree .root svg {
    margin-right: 0;
}

.tree .off {
    color: #777;
}

.twig, .elbow {
    display: flex;
    align-items: center;
    flex: 0 0 12px;
    height: 100%;
    background: linear-gradient(#999, #999) 0 50% / 9px 1px no-repeat;
}

.twig button {
    justify-content: center;
    width: 7px;
    height: 7px;
    margin-left: -3px;
    font-size: 7px;
    line-height: 5px;
    color: #000;
    background: #fff;
    border: 1px solid #888;
}

.elbow {
    align-self: flex-start;
    height: 50%;
    margin-left: 14px;
    background: none;
    border-left: 1px solid #999;
    border-bottom: 1px solid #999;
}

.tree .selected {
    color: #fff;
    background: #3399ff;
}

/* Canvas */
.canvas {
    position: relative;
    flex: 1;
    min-width: 0;
    background: linear-gradient(#333, #a3a3a3);
}

.drawing {
    width: 100%;
    height: 100%;
}

.profile circle {
    fill: #858585;
    stroke: var(--sketch-blue);
}

.construction path {
    fill: none;
    stroke: #24369f;
    stroke-dasharray: 3 2;
}

.dimension path {
    fill: none;
    stroke: var(--sketch-blue);
}

.value text {
    font-family: "DejaVu Sans", sans-serif;
    font-size: 9px;
    text-anchor: middle;
    fill: var(--sketch-blue);
}

.value .angle {
    font-size: 7px;
    font-weight: bold;
}

.axis-x, .axis-y {
    font-size: 9px;
    text-anchor: middle;
    fill: #c33;
}

.axis-y {
    font-size: 8px;
    fill: #4fc85a;
}

.view-buttons {
    position: absolute;
    top: 5px;
    right: 3px;
    display: flex;
    gap: 6px;
}

.view-buttons svg {
    width: 9px;
    height: 9px;
}

.view-cube {
    position: absolute;
    top: 41px;
    right: 24px;
    justify-content: center;
    width: 34px;
    height: 34px;
    color: #555c6b;
    background: #8f8f8f;
    border: 1px solid #9c9c9c;
    box-shadow: 0 -2px 4px #2b2b2b;
}

.view-cube span {
    font-size: 8px;
    font-weight: bold;
    transform: rotate(180deg);
}

.nav-bar {
    position: absolute;
    top: 95px;
    right: 2px;
    display: flex;
    flex-direction: column;
    align-items: center;
    justify-content: space-between;
    width: 26px;
    height: 150px;
    padding: 2px;
    color: #555;
    background: #8b8b8b;
    border: 1px solid #555;
    border-radius: 4px;
}

.nav-bar hr {
    width: 100%;
    border: none;
    border-top: 1px solid #666;
}

.nav-bar .wheel svg {
    width: 16px;
    height: 16px;
}

.nav-bar .tiny {
    align-self: flex-end;
}

.nav-bar .tiny svg {
    width: 6px;
    height: 6px;
}

/* Status bar */
.status-bar {
    display: flex;
    align-items: center;
    flex-shrink: 0;
    height: 20px;
    padding: 0 18px 0 1px;
    font-family: "DejaVu Sans Condensed", "DejaVu Sans", sans-serif;
    color: #222;
    background: linear-gradient(#fafafa, #c4c4c4);
    border-bottom: 2px solid #5d6b7a;
}

.status-text {
    flex: 1;
}

.count {
    width: 28px;
    text-align: right;
    border-left: 1px solid #ddd;
}
```
